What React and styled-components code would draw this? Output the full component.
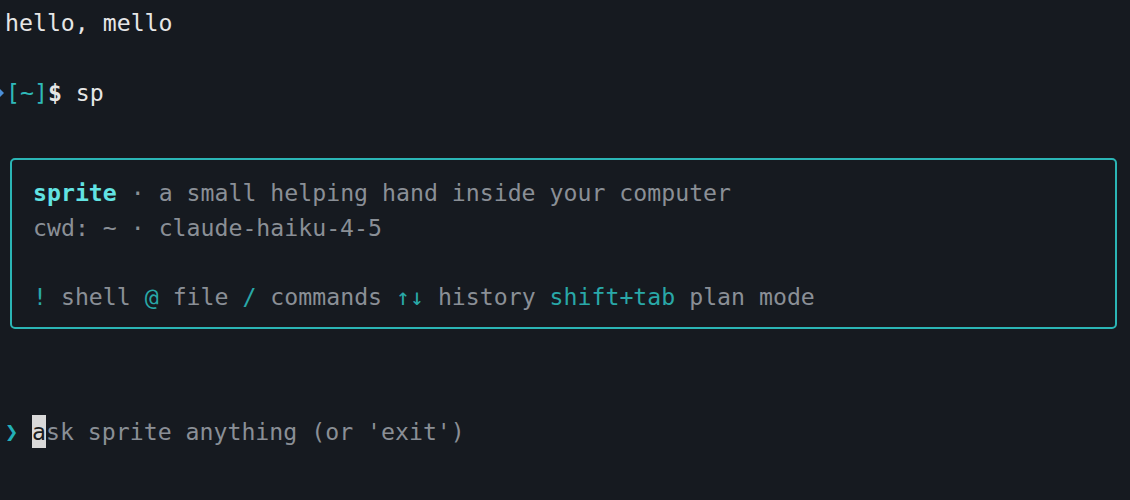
import React from "react";
import styled, { createGlobalStyle } from "styled-components";

const Global = createGlobalStyle`
  html, body {
    margin: 0;
    padding: 0;
    background: #161a20;
  }
  body {
    font-family: "DejaVu Sans Mono", "Liberation Mono", monospace;
    font-size: 23.2px;
    color: #e6e6e6;
    overflow: hidden;
  }
`;

const Terminal = styled.div`
  width: 1130px;
  height: 500px;
  padding-top: 5px;
  box-sizing: border-box;
  overflow: hidden;
`;

const Line = styled.div`
  line-height: 35px;
  height: 35px;
  padding-left: ${(p) => (p.$indent ?? 5)}px;
  white-space: pre;
  display: flex;
  align-items: center;
`;

const Tip = styled.span`
  display: inline-block;
  width: 0;
  height: 0;
  border-top: 4px solid transparent;
  border-bottom: 4px solid transparent;
  border-left: 4px solid #4b8fd8;
  margin-right: 2px;
`;

const Span = styled.span`
  color: ${(p) =>
    p.$tone === "teal"
      ? "#29a8a8"
      : p.$tone === "accent"
      ? "#2fb9b9"
      : p.$tone === "bright"
      ? "#62e3e3"
      : p.$tone === "dim"
      ? "#8a8f96"
      : "#e6e6e6"};
  font-weight: ${(p) => (p.$bold ? 700 : 400)};
`;

const Box = styled.div`
  margin: 48px 13px 0 10px;
  border: 2px solid #2bb5b5;
  border-radius: 5px;
  padding: 16px 21px 13px;
`;

const BoxLine = styled.div`
  line-height: 34.5px;
  height: 34.5px;
  white-space: pre;
  color: #8a8f96;
`;

const Prompt = styled.div`
  margin-top: 85px;
  padding-left: 5px;
  height: 35px;
  display: flex;
  align-items: center;
  white-space: pre;
  color: #8a8f96;
`;

const Chevron = styled.span`
  color: #22b0b8;
  font-size: 22px;
  font-weight: 700;
  width: 27px;
  flex: none;
  display: inline-block;
`;

const Cursor = styled.span`
  display: inline-block;
  background: #d9d9d9;
  color: #1a1c20;
  height: 33px;
  line-height: 33px;
`;

export default function App() {
  return (
    <>
      <Global />
      <Terminal>
        <Line>hello, mello</Line>
        <Line />
        <Line $indent={0}>
          <Tip />
          <Span $tone="accent">[~]</Span>
          <Span $bold>$</Span>
          <Span> sp</Span>
        </Line>
        <Box>
          <BoxLine>
            <Span $tone="bright" $bold>sprite</Span>
            <Span $tone="dim"> · a small helping hand inside your computer</Span>
          </BoxLine>
          <BoxLine>cwd: ~ · claude-haiku-4-5</BoxLine>
          <BoxLine />
          <BoxLine>
            <Span $tone="teal">!</Span>
            <Span $tone="dim"> shell </Span>
            <Span $tone="teal">@</Span>
            <Span $tone="dim"> file </Span>
            <Span $tone="teal">/</Span>
            <Span $tone="dim"> commands </Span>
            <Span $tone="teal">↑↓</Span>
            <Span $tone="dim"> history </Span>
            <Span $tone="teal">shift+tab</Span>
            <Span $tone="dim"> plan mode</Span>
          </BoxLine>
        </Box>
        <Prompt>
          <Chevron>❯</Chevron>
          <Cursor>a</Cursor>
          <span>sk sprite anything (or 'exit')</span>
        </Prompt>
      </Terminal>
    </>
  );
}
